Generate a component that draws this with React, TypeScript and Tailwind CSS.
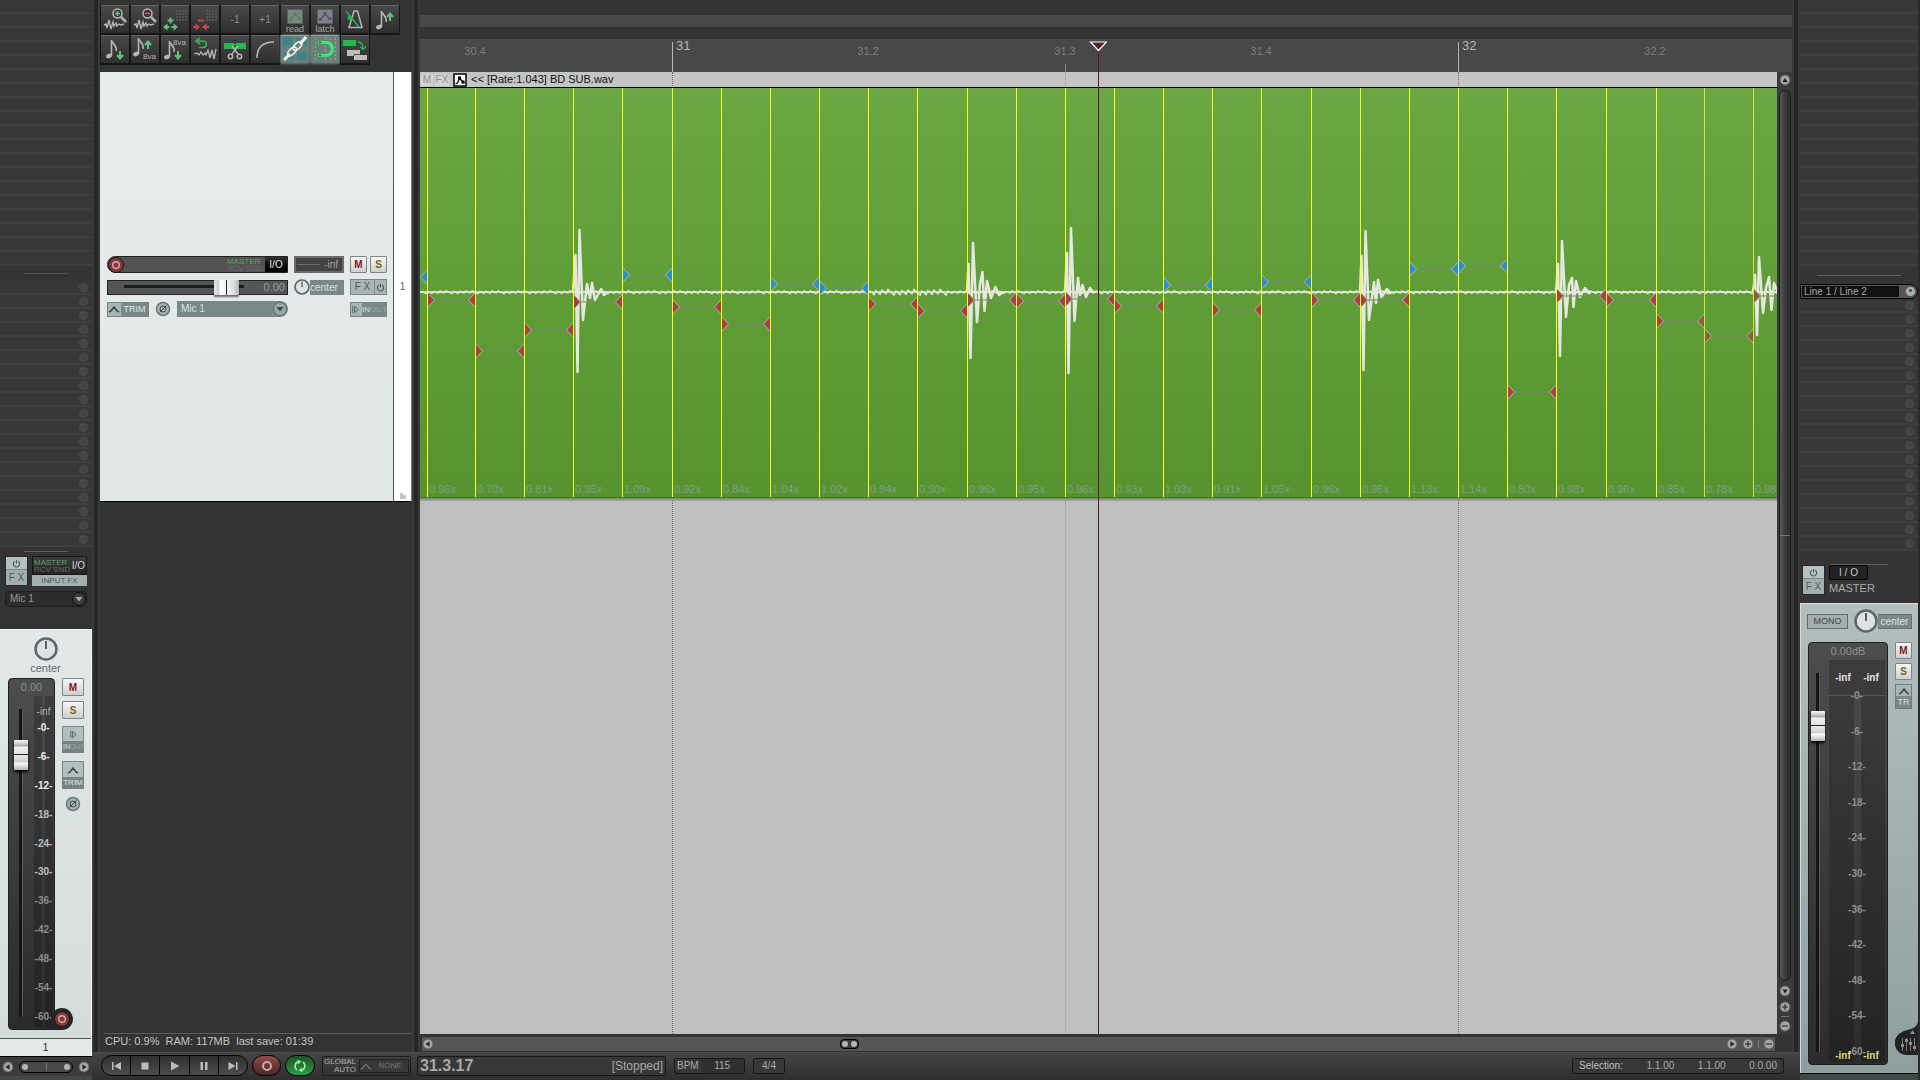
import { useState } from 'react';

interface Marker {
  x: number;
  y: number;
  rate: string;
  dim?: boolean;
}

// x is measured from the left edge of the arrange view, y from the top of the item body
const markers: Marker[] = [
  { x: 7, y: 212, rate: '0.96x' },
  { x: 55, y: 263, rate: '0.70x' },
  { x: 104, y: 242, rate: '0.81x' },
  { x: 153, y: 214, rate: '0.95x' },
  { x: 202, y: 187, rate: '1.09x' },
  { x: 252, y: 219, rate: '0.92x' },
  { x: 301, y: 236, rate: '0.84x' },
  { x: 350, y: 196, rate: '1.04x' },
  { x: 399, y: 200, rate: '1.02x' },
  { x: 448, y: 216, rate: '0.94x' },
  { x: 497, y: 223, rate: '0.90x' },
  { x: 547, y: 212, rate: '0.96x' },
  { x: 596, y: 213, rate: '0.95x' },
  { x: 645, y: 211, rate: '0.96x' },
  { x: 694, y: 218, rate: '0.93x' },
  { x: 743, y: 197, rate: '1.03x' },
  { x: 792, y: 222, rate: '0.91x' },
  { x: 841, y: 194, rate: '1.05x' },
  { x: 891, y: 212, rate: '0.96x' },
  { x: 940, y: 212, rate: '0.96x' },
  { x: 989, y: 181, rate: '1.13x' },
  { x: 1038, y: 178, rate: '1.14x' },
  { x: 1087, y: 304, rate: '0.50x' },
  { x: 1136, y: 208, rate: '0.98x' },
  { x: 1186, y: 212, rate: '0.96x' },
  { x: 1236, y: 233, rate: '0.85x' },
  { x: 1284, y: 248, rate: '0.78x', dim: true },
  { x: 1333, y: 208, rate: '0.98x', dim: true },
];

const transients = [
  'M153 204L155.5 167L157.5 284L159.5 142L163 232L167 196L170 210L172 195L175 212L181 201L184 207L188 204',
  'M547 204L548.5 176L550.5 270L553 155L557 234L560 196L562.5 184L564.5 223L567 193L571 210L575.5 199L579 207L583 204',
  'M645 204L647 165L648.5 285L651 140L654.5 233L658 190L660 207L662.5 197L666 209L670 200L674 205',
  'M940 204L941.5 168L943.5 282L945.5 143L949 232L954 194L956 215L958 192L961.5 209L967 201L971 206',
  'M1136 204L1138 176L1140 268L1142 153L1146 229L1149 197L1152 190L1153.5 219L1156 193L1160 209L1165 200L1170 206',
  'M1333 204L1335 187L1337 247L1339 169L1343 225L1346 200L1349 189L1351.5 222L1354 195L1358 205',
];

function noisePath() {
  let d = 'M0 204';
  for (let x = 2; x < 1372; x += 2) {
    const loud = x > 448 && x < 530 ? 2 : 1;
    const n = ((x * 7919) % 13) / 13;
    d += `L${x} ${(204 + (n - 0.4) * 3 * loud).toFixed(1)}`;
  }
  return d;
}

const baseline = noisePath();

const rulerLabels = [
  { x: 55, text: '30.4' },
  { x: 448, text: '31.2' },
  { x: 645, text: '31.3' },
  { x: 841, text: '31.4' },
  { x: 1235, text: '32.2' },
];

const dbScale = ['-0-', '-6-', '-12-', '-18-', '-24-', '-30-', '-36-', '-42-', '-48-', '-54-', '-60-'];

const GREEN = '#5fc47f';
const GRAY = '#b5b5b5';

const Note = ({ x = 0, y = 0 }: { x?: number; y?: number }) => (
  <g transform={`translate(${x} ${y})`} stroke={GRAY} fill="none" strokeWidth="1.6">
    <ellipse cx="3" cy="17" rx="3" ry="2.2" fill={GRAY} stroke="none" transform="rotate(-20 3 17)" />
    <path d="M5.5 17V1C6 5 11.500 6 10 12" />
  </g>
);

const Arrow = ({ x, y, down }: { x: number; y: number; down?: boolean }) => (
  <path
    d={down ? `M${x} ${y}v6m-3 -2l3 3.500l3 -3.500` : `M${x} ${y}v-7m-3 3l3 -3.500l3 3.500`}
    fill="none"
    stroke={GREEN}
    strokeWidth="2"
  />
);

const DottedRules = () => (
  <path d="M16 5v12M19 5v12M22 5v12M25 5v12" stroke="#6a6a6a" strokeDasharray="2 1" />
);

const MiniWave = () => (
  <path d="M3 20l2 -1l1 4l2 -8l2 9l2 -7l1 4l2 -3l1 3l2 -2l2 1l3 -1" fill="none" stroke={GRAY} strokeWidth="1.4" />
);

const AutoMode = ({ color }: { color: string }) => (
  <>
    <rect x="6.500" y="4.500" width="15" height="14" fill="#7a8684" stroke="#59615f" />
    <path d="M8 15l2 -1l4 -5l3 3l3 2" fill="none" stroke={color} strokeWidth="1.5" />
    <path d="M8 13h3v3h-3zM12.500 7h3v3h-3zM17 12h3v3h-3z" fill={color} />
  </>
);

const topTools = [
  {
    name: 'Zoom in',
    icon: (
      <>
        <MiniWave />
        <circle cx="16.500" cy="8.500" r="4.500" fill="#3a3a3a" stroke={GRAY} strokeWidth="1.5" />
        <path d="M20 12l5 5" stroke={GRAY} strokeWidth="2.500" />
        <path d="M14 8.500h5M16.500 6v5" stroke={GREEN} strokeWidth="1.5" />
      </>
    ),
  },
  {
    name: 'Zoom out',
    icon: (
      <>
        <MiniWave />
        <circle cx="16.500" cy="8.500" r="4.500" fill="#3a3a3a" stroke={GRAY} strokeWidth="1.5" />
        <path d="M20 12l5 5" stroke={GRAY} strokeWidth="2.500" />
        <path d="M14 8.500h5" stroke="#d25555" strokeWidth="1.5" />
      </>
    ),
  },
  {
    name: 'Widen grid',
    icon: (
      <>
        <DottedRules />
        <path d="M6.500 15.500h6M9.500 12.500v6" stroke={GREEN} strokeWidth="2" />
        <path d="M2 22l4.500 -3.500v2.500h2v2h-2v2.500zM17 22l-4.500 -3.500v2.500h-2v2h2v2.500z" fill={GREEN} />
      </>
    ),
  },
  {
    name: 'Narrow grid',
    icon: (
      <>
        <DottedRules />
        <path d="M7 15.500h6" stroke="#c94848" strokeWidth="2" />
        <path d="M9 22l-4.500 -3.500v2.500h-2.500v2h2.500v2.500zM11 22l4.500 -3.500v2.500h2.500v2h-2.500v2.500z" fill="#c94848" />
      </>
    ),
  },
  { name: 'Minus one', text: '-1' },
  { name: 'Plus one', text: '+1' },
  { name: 'Automation read', icon: <AutoMode color="#4c8a58" />, caption: 'read' },
  { name: 'Automation latch', icon: <AutoMode color="#6b4a82" />, caption: 'latch' },
  {
    name: 'Metronome',
    icon: (
      <>
        <path d="M13 6h3.500l4.500 16.500h-13z" fill="none" stroke={GRAY} strokeWidth="1.5" />
        <path d="M5 6l13 16" stroke="#22b455" strokeWidth="1.6" />
        <path d="M8 10l4 3l-3 3l-3 -3z" fill="#22b455" />
      </>
    ),
  },
  {
    name: 'Semitone up',
    icon: (
      <>
        <Note x={5} y={5} />
        <Arrow x={19} y={16} />
      </>
    ),
  },
];

const bottomTools = [
  {
    name: 'Semitone down',
    icon: (
      <>
        <Note x={5} y={4} />
        <Arrow x={19} y={16} down />
      </>
    ),
  },
  {
    name: 'Octave up',
    icon: (
      <>
        <Note x={2} y={2} />
        <Arrow x={17} y={14} />
        <text x="12" y="24" fontSize="8" fill={GRAY}>8va</text>
      </>
    ),
  },
  {
    name: 'Octave down',
    icon: (
      <>
        <Note x={3} y={5} />
        <Arrow x={17} y={16} down />
        <text x="12" y="10" fontSize="8" fill={GRAY}>8va</text>
      </>
    ),
  },
  {
    name: 'Reverse item',
    icon: (
      <>
        <path d="M6 6h6a3 3 0 0 1 0 6.500h-4M9 3l-4 3l4 3" fill="none" stroke="#2fb35a" strokeWidth="1.6" />
        <path d="M3 19l3 -1l2 2l2 -3l2 3l2 -2l1 2l2 -5l2 8l2 -8l2 9l2 -10" fill="none" stroke={GRAY} strokeWidth="1.3" />
      </>
    ),
  },
  {
    name: 'Split item',
    icon: (
      <>
        <rect x="3" y="8" width="22" height="6" fill="#23b950" />
        <path d="M14 4v10" stroke="#222" strokeDasharray="2 1" />
        <path d="M11 11l6 8M17 11l-6 8" stroke={GRAY} strokeWidth="1.5" />
        <circle cx="9.500" cy="21.500" r="2.200" fill="none" stroke={GRAY} strokeWidth="1.5" />
        <circle cx="18.500" cy="21.500" r="2.200" fill="none" stroke={GRAY} strokeWidth="1.5" />
      </>
    ),
  },
  { name: 'Fade in', icon: <path d="M6 23C6 13 11 7 23 7" fill="none" stroke={GRAY} strokeWidth="1.6" /> },
  {
    name: 'Grouping',
    active: true,
    icon: (
      <>
        <path d="M2 2h10v9h-10zM15 3h5v5h-5zM21 5h5v6h-5zM16 16h10v9h-10zM3 17h4v4h-4zM7 20h6v5h-6z" fill="#3f8489" />
        <path d="M3 25L9 19M19 9L25 2" stroke="#eef4f2" strokeWidth="3" />
        <ellipse cx="11" cy="16.500" rx="5.500" ry="2.800" transform="rotate(-45 11 16.500)" fill="none" stroke="#eef4f2" strokeWidth="1.7" />
        <ellipse cx="16.500" cy="11" rx="5.500" ry="2.800" transform="rotate(-45 16.500 11)" fill="none" stroke="#eef4f2" strokeWidth="1.7" />
      </>
    ),
  },
  {
    name: 'Snap',
    active: true,
    icon: (
      <>
        <path d="M4.500 3v22" stroke="#27e069" strokeDasharray="2 2" />
        <path d="M14.500 3v22M19.500 3v22M24.500 3v22" stroke="#8fa79b" strokeDasharray="2 2" />
        <path d="M7 7.500h8a6.500 6.500 0 0 1 0 13h-8" fill="none" stroke="#35ee70" strokeWidth="3" />
        <path d="M8 7.500h2M8 20.500h2" stroke="#14602e" strokeWidth="1.5" />
      </>
    ),
  },
  {
    name: 'Ripple editing',
    icon: (
      <>
        <rect x="2" y="5" width="13" height="6" fill="#23b950" />
        <path d="M17 7q5 0 5 7M19 11.500l3 3l3 -3" fill="none" stroke="#23b950" strokeWidth="1.3" />
        <path d="M6 15h13v5h7v5h-13v-4h-7z" fill="#bdbdbd" />
        <path d="M13 21v-1.500h6" fill="none" stroke="#555" />
      </>
    ),
  },
];

interface Tool {
  name: string;
  icon?: React.ReactNode;
  text?: string;
  caption?: string;
  active?: boolean;
}

function ToolButton({ tool }: { tool: Tool }) {
  return (
    <button
      aria-label={tool.name}
      className={`relative h-7 w-7 border-t text-[10px] text-[#8d8d8d] ${
        tool.active
          ? 'border-[#93a29d] bg-[#6d7f7b] shadow-[0_0_3px_#9fb5af]'
          : 'border-[#626262] bg-gradient-to-b from-[#484848] to-[#2e2e2e] shadow-[0_1px_0_1px_#161616]'
      }`}
    >
      {tool.icon && (
        <svg viewBox="0 0 28 28" className="absolute inset-x-0 -top-px h-7 w-7">
          {tool.icon}
        </svg>
      )}
      {tool.text}
      {tool.caption && (
        <span className="absolute inset-x-0 bottom-0 text-[9px] leading-[8px] text-[#a9a9a9]">{tool.caption}</span>
      )}
    </button>
  );
}

function Slots({ count, sends }: { count: number; sends?: boolean }) {
  return (
    <div className="shrink-0">
      {Array.from({ length: count }, (_, i) => (
        <div
          key={i}
          className="flex h-[14px] items-center justify-end border-b-2 border-[#3f3f3f] bg-[#373737] pr-1"
        >
          {sends && <span className="h-[9px] w-[9px] rounded-full border border-[#4c4f4e] bg-[#424544]" />}
        </div>
      ))}
    </div>
  );
}

const Divider = () => (
  <div className="flex h-[15px] shrink-0 items-center justify-center">
    <span className="h-px w-11 bg-[#505050]" />
  </div>
);

function PanKnob({ size }: { size: 'sm' | 'lg' }) {
  return (
    <button aria-label="Pan" className="shrink-0">
      <svg viewBox="0 0 24 24" className={size === 'lg' ? 'h-6 w-6' : 'h-4 w-4'}>
        <circle cx="12" cy="12" r="10.500" fill="#dde2e2" stroke="#5b6969" strokeWidth="2.500" />
        <path d="M12 4v8" stroke="#333" strokeWidth="1.5" />
      </svg>
    </button>
  );
}

function MuteSolo({ letter, className }: { letter: 'M' | 'S'; className: string }) {
  return (
    <button
      aria-label={letter === 'M' ? 'Mute' : 'Solo'}
      className={`flex items-center justify-center rounded-[1px] border border-[#7f8686] bg-gradient-to-b from-[#f6f6f6] to-[#cfcfcf] text-[10px] font-bold ${
        letter === 'M' ? 'text-[#7b1717]' : 'text-[#6f6a1a]'
      } ${className}`}
    >
      {letter}
    </button>
  );
}

const PowerIcon = () => (
  <svg viewBox="0 0 10 10" className="h-[9px] w-[9px]">
    <path d="M3 2.500a3.500 3.500 0 1 0 4 0M5 1v4" fill="none" stroke="#4f5b5b" strokeWidth="1.2" />
  </svg>
);

const EnvIcon = () => (
  <svg viewBox="0 0 12 10" className="h-[10px] w-3">
    <path d="M1 8l2 -1l3 -4l3 4l2 1" fill="none" stroke="#3c4747" strokeWidth="1.5" />
  </svg>
);

const MonitorIcon = () => (
  <svg viewBox="0 0 10 10" className="h-[9px] w-[9px] shrink-0">
    <path d="M2 1v8M4 1.500l4 3.500l-4 3.500z" fill="none" stroke="#536060" />
  </svg>
);

const PhaseButton = () => (
  <button aria-label="Phase" className="flex h-4 w-4 shrink-0 items-center justify-center">
    <svg viewBox="0 0 16 16" className="h-4 w-4">
      <circle cx="8" cy="8" r="6.500" fill="#a7b3b3" stroke="#6d7a7a" strokeWidth="1.5" />
      <circle cx="8" cy="8" r="3" fill="none" stroke="#414b4b" />
      <path d="M4.500 11.500l7 -7" stroke="#414b4b" />
    </svg>
  </button>
);

const RecordButton = () => (
  <button aria-label="Record arm" className="h-4 w-4 shrink-0">
    <svg viewBox="0 0 16 16" className="h-4 w-4">
      <circle cx="8" cy="8" r="7.500" fill="#7e3b3b" stroke="#2a1212" />
      <circle cx="8" cy="8" r="3.300" fill="none" stroke="#d8a8a8" strokeWidth="1.4" />
    </svg>
  </button>
);

const FxStack = () => (
  <div className="h-[30px] w-[23px] shrink-0 border border-[#22282a] bg-[#a3afaf]">
    <button aria-label="Bypass FX" className="flex h-[13px] w-full items-center justify-center border-b border-[#7d8989] bg-[#b5c0c0]">
      <PowerIcon />
    </button>
    <button className="block h-[15px] w-full text-[10px] leading-[15px] text-[#4f5b5b]">F X</button>
  </div>
);

function Routing() {
  return (
    <span className="text-[8px] leading-[7px]">
      <span className="block text-[#58a563]">MASTER</span>
      <span className="block text-[#6a6a6a]">RCV SND</span>
    </span>
  );
}

function InputSelect({ className, dark }: { className: string; dark?: boolean }) {
  return (
    <label className={`relative block ${className}`}>
      <select
        aria-label="Record input"
        className={`block h-4 w-full appearance-none pl-1 text-[10px] leading-[14px] ${
          dark ? 'rounded-sm border border-[#1d1d1d] bg-[#2c2c2c] text-[#9a9a9a]' : 'rounded-r-full bg-[#7a8888] text-[#dbe1e1]'
        }`}
      >
        <option>Mic 1</option>
      </select>
      <svg viewBox="0 0 16 16" className="pointer-events-none absolute right-0 top-0 h-4 w-4">
        <circle cx="8" cy="8" r="6.500" fill={dark ? '#3b3b3b' : '#9aa7a7'} stroke={dark ? '#0f0f0f' : '#5c6969'} />
        <path d="M4.500 6h7l-3.500 4.500z" fill={dark ? '#a8a8a8' : '#3f4b4b'} />
      </svg>
    </label>
  );
}

const verticalFader =
  'block w-[14px] shrink-0 appearance-none bg-[linear-gradient(to_right,transparent_5px,#151515_5px,#151515_8px,#5c5c5c_8px,#5c5c5c_9px,transparent_9px)] [writing-mode:vertical-lr] [direction:rtl] [&::-webkit-slider-thumb]:h-[30px] [&::-webkit-slider-thumb]:w-[14px] [&::-webkit-slider-thumb]:appearance-none [&::-webkit-slider-thumb]:rounded-[1px] [&::-webkit-slider-thumb]:bg-[linear-gradient(#fff_0,#a9a9a9_6px,#f1f1f1_7px,#e2e2e2_14px,#222_14px,#222_15px,#e8e8e8_15px,#cfcfcf_22px,#fff_23px,#b4b4b4_30px)] [&::-webkit-slider-thumb]:shadow-[0_2px_3px_#000]';

function MixerStrip() {
  return (
    <aside className="flex w-[92px] shrink-0 flex-col bg-[#333333]">
      <Slots count={19} />
      <Divider />
      <Slots count={19} sends />
      <div className="flex h-[9px] shrink-0 items-center justify-center">
        <span className="h-px w-11 bg-[#606060]" />
      </div>
      <div className="flex shrink-0 justify-between px-[5px]">
        <FxStack />
        <div className="w-[55px]">
          <div className="flex h-[19px] items-center justify-between border border-[#161616] bg-gradient-to-b from-[#3d3d3d] to-[#242424] px-px">
            <Routing />
            <button className="text-[10px] text-[#d0d0d0]">I/O</button>
          </div>
          <button className="block h-[11px] w-full bg-[#a3afaf] text-[8px] leading-[11px] text-[#4b5858]">INPUT FX</button>
        </div>
      </div>
      <InputSelect dark className="mx-[5px] mt-[5px] shrink-0" />
      <div className="mt-[22px] flex min-h-0 flex-1 flex-col border-r border-t border-[#f4f6f6] bg-gradient-to-b from-[#e3e8e8] to-[#d3dbdb]">
        <div className="flex h-[48px] shrink-0 flex-col items-center pt-[7px] text-[11px] leading-[14px] text-[#5e6c6c]">
          <PanKnob size="lg" />
          center
        </div>
        <div className="flex min-h-0 flex-1 gap-[7px] pb-2 pl-2">
          <div className="relative flex w-[47px] flex-col rounded-sm border border-[#1b2020] bg-gradient-to-b from-[#4d4d4d] to-[#2b2b2b]">
            <div className="h-[17px] text-center text-[11px] leading-[17px] text-[#8f8f8f]">0.00</div>
            <div className="flex min-h-0 flex-1 pl-[5px]">
              <input type="range" aria-label="Track volume" defaultValue={89} className={`mb-3 mt-[13px] ${verticalFader}`} />
              <div className="mb-0.5 ml-1.5 flex w-[19px] flex-col items-center bg-[linear-gradient(to_right,#0003_8px,transparent_8px,transparent_11px,#0003_11px)] text-[10px] font-bold leading-3">
                <span className="mt-2.5 font-normal text-[#b0b0b0]">-inf</span>
                <div className="mt-1 flex flex-1 flex-col items-center justify-between pb-1">
                  {dbScale.map((db, i) => (
                    <span key={db} className={i < 3 ? 'text-[#ededed]' : i < 6 ? 'text-[#bdbdbd]' : 'text-[#8c8c8c]'}>
                      {db}
                    </span>
                  ))}
                </div>
              </div>
            </div>
            <span className="absolute -bottom-px -right-[19px] flex h-[22px] w-[22px] items-center justify-center rounded-full rounded-bl-none bg-[#222626]">
              <RecordButton />
            </span>
          </div>
          <div className="flex flex-col items-center">
            <MuteSolo letter="M" className="h-[18px] w-[22px]" />
            <MuteSolo letter="S" className="mt-[5px] h-[18px] w-[22px]" />
            <button aria-label="Record monitoring" className="mt-[7px] w-[22px] border border-[#77857f] bg-[#b3bebe]">
              <span className="flex h-[14px] items-center justify-center"><MonitorIcon /></span>
              <span className="block h-[11px] bg-[#768383] text-[7px] leading-[11px] text-[#d8dede]">IN<span className="text-[#9aa5a5]">OUT</span></span>
            </button>
            <button aria-label="Envelopes" className="mt-2 w-[22px] border border-[#77857f] bg-[#b3bebe]">
              <span className="flex h-[15px] items-center justify-center"><EnvIcon /></span>
              <span className="block h-[11px] bg-[#768383] text-[8px] leading-[11px] text-[#e4e9e9]">TRIM</span>
            </button>
            <div className="mt-[7px]"><PhaseButton /></div>
          </div>
        </div>
        <div className="h-[18px] shrink-0 border-t border-[#555] bg-[#e4e9e9] text-center text-[11px] leading-[17px] text-[#333]">1</div>
      </div>
      <div className="flex h-5 shrink-0 items-center justify-between border-t border-black bg-[#3b3b3b] px-0.5">
        <ScrollButton kind="left" />
        <div className="flex h-3 w-[54px] items-center justify-between rounded-full border border-black bg-[#484848] px-0.5">
          <span className="h-1.5 w-1.5 rounded-full bg-[#b5b5b5]" />
          <span className="h-2 w-px bg-[#777]" />
          <span className="h-1.5 w-1.5 rounded-full bg-[#b5b5b5]" />
        </div>
        <ScrollButton kind="right" />
      </div>
      <div className="h-1 shrink-0 bg-[#3d4a48]" />
    </aside>
  );
}

const scrollShapes: Record<string, string> = {
  up: 'M3.500 8h5l-2.500 -4z',
  down: 'M3.500 4.500h5l-2.500 4z',
  left: 'M7.500 3.500v5l-4 -2.500z',
  right: 'M4.500 3.500v5l4 -2.500z',
  plus: 'M3 5.500h2.500v-2.500h1v2.500h2.500v1h-2.500v2.500h-1v-2.500h-2.500z',
  minus: 'M3 5.500h6v1h-6z',
};

function ScrollButton({ kind }: { kind: string }) {
  return (
    <button aria-label={kind} className="h-3 w-3 shrink-0">
      <svg viewBox="0 0 12 12" className="h-3 w-3">
        <circle cx="6" cy="6" r="5" fill="#a5a5a5" stroke="#5f5f5f" />
        <path d={scrollShapes[kind]} fill="#1c1c1c" />
      </svg>
    </button>
  );
}

function TrackPanel() {
  return (
    <section className="flex w-[312px] shrink-0 flex-col">
      <div className="flex h-[72px] shrink-0 flex-col gap-0.5 pl-px pt-[5px]">
        <div className="flex gap-0.5">
          {topTools.map((tool) => <ToolButton key={tool.name} tool={tool} />)}
        </div>
        <div className="flex gap-0.5">
          {bottomTools.map((tool) => <ToolButton key={tool.name} tool={tool} />)}
        </div>
      </div>
      <div className="flex h-[430px] shrink-0 border-b border-r border-black border-r-[#777] bg-gradient-to-b from-[#e8ecec] to-[#e1e6e7]">
        <div className="flex flex-1 flex-col justify-center gap-1.5 pl-[7px] pr-1.5">
          <div className="flex items-center gap-1.5">
            <div className="flex h-[17px] w-[181px] items-center rounded-l-full border border-[#222] bg-[#535353]">
              <RecordButton />
              <span className="ml-auto mr-0.5"><Routing /></span>
              <button className="h-full w-[22px] bg-gradient-to-b from-[#333] to-black text-[10px] text-[#e0e0e0]">I/O</button>
            </div>
            <div className="flex h-[17px] w-[50px] items-center border-2 border-[#6a6a6a] bg-[#424242] pl-px">
              <span className="h-px flex-1 bg-[#6b6b6b]" />
              <span className="px-1 text-[10px] text-[#a3a3a3]">-inf</span>
            </div>
            <div className="ml-auto flex gap-[3px]">
              <MuteSolo letter="M" className="h-[17px] w-[17px]" />
              <MuteSolo letter="S" className="h-[17px] w-[17px]" />
            </div>
          </div>
          <div className="flex items-center gap-1.5">
            <div className="flex h-[15px] w-[181px] items-center border border-[#222] bg-[#555] pl-4">
              <input
                type="range"
                aria-label="Volume"
                defaultValue={95}
                className="h-4 w-[120px] appearance-none bg-[linear-gradient(transparent_6px,#1c1c1c_6px,#1c1c1c_9px,transparent_9px)] [&::-webkit-slider-thumb]:h-[15px] [&::-webkit-slider-thumb]:w-[25px] [&::-webkit-slider-thumb]:appearance-none [&::-webkit-slider-thumb]:rounded-[1px] [&::-webkit-slider-thumb]:bg-[linear-gradient(to_right,#e8e8e8_0,#cfcfcf_5px,#fff_6px,#f0f0f0_12px,#222_12px,#222_13px,#f2f2f2_13px,#ddd_20px,#b5b5b5_25px)] [&::-webkit-slider-thumb]:shadow-[0_2px_2px_#0008]"
              />
              <span className="ml-auto pr-0.5 text-[11px] text-[#9a9a9a]">0.00</span>
            </div>
            <div className="flex w-[50px] items-center">
              <PanKnob size="sm" />
              <span className="h-[15px] flex-1 bg-[#7a8888] text-[10px] leading-[15px] text-[#dbe1e1]">center</span>
            </div>
            <div className="ml-auto flex h-4 w-[37px] border border-[#7a8686] bg-[#aab5b5]">
              <button className="flex-1 text-[10px] leading-[14px] text-[#4f5b5b]">F X</button>
              <button aria-label="Bypass" className="flex w-3 items-center justify-center border-l border-[#7a8686]"><PowerIcon /></button>
            </div>
          </div>
          <div className="flex items-center gap-1.5">
            <button aria-label="Envelopes" className="flex h-[15px] w-[42px] items-center border border-[#77857f] bg-[#a9b5b5]">
              <EnvIcon />
              <span className="ml-px h-full flex-1 bg-[#7a8888] text-[9px] leading-[13px] text-[#e0e6e6]">TRIM</span>
            </button>
            <PhaseButton />
            <InputSelect className="w-[111px]" />
            <button aria-label="Monitoring" className="ml-auto flex h-[15px] w-[37px] items-center border border-[#77857f] bg-[#a9b5b5]">
              <MonitorIcon />
              <span className="ml-0.5 h-full flex-1 bg-[#7a8888] text-left text-[8px] leading-[13px] text-[#dbe1e1]">IN<span className="text-[#9aa7a7]">OUT</span></span>
            </button>
          </div>
        </div>
        <div className="relative flex w-[19px] items-center justify-center border-l border-[#555] bg-white text-[10px] text-[#666]">
          1
          <svg viewBox="0 0 8 8" className="absolute bottom-px right-1 h-2 w-2">
            <path d="M1 1h3v2h3v4h-6z" fill="#c4c4c4" />
          </svg>
        </div>
      </div>
      <div className="flex-1" />
      <div className="ml-1 h-[19px] shrink-0 border-t border-[#5a5a5a] pl-px text-[11px] leading-[14px] text-[#c4c4c4]">
        <span className="whitespace-pre">CPU: 0.9%  RAM: 117MB  last save: 01:39</span>
      </div>
    </section>
  );
}

function StretchHandles() {
  const ends = [{ x: -42, y: 189, rate: '1.10x' } as Marker, ...markers];
  return (
    <>
      {ends.map((m, i) => {
        const end = ends[i + 1]?.x ?? m.x + 49;
        const fill = m.rate.startsWith('1') ? '#2a8fd0' : m.dim ? '#8a6040' : '#a83f43';
        const endFill = ends[i + 1]?.dim && !m.rate.startsWith('1') ? '#8a6040' : fill;
        return (
          <g key={m.x} stroke="#b0b5a0" strokeWidth="1">
            <path d={`M${m.x + 7} ${m.y}H${end - 6}`} stroke="#7c8478" />
            <path d={`M${m.x + 1} ${m.y - 7}l6.500 7l-6.500 7`} fill={fill} />
            <path d={`M${end} ${m.y - 7}l-6.500 7l6.500 7`} fill={endFill} />
          </g>
        );
      })}
    </>
  );
}

function Arrange() {
  return (
    <section className="flex min-w-0 flex-1 flex-col">
      <div className="mt-[15px] h-3 shrink-0 bg-[#484848]" />
      <div className="relative mt-3 h-[33px] shrink-0 overflow-hidden bg-[#484848] text-[11px] leading-[13px] text-[#7d7d7d]">
        {rulerLabels.map((l) => (
          <span key={l.text} className="absolute top-[6px] -translate-x-1/2" style={{ left: l.x }}>{l.text}</span>
        ))}
        <span className="absolute left-[256px] top-0 text-[13px] text-[#b5b5b5]">31</span>
        <span className="absolute bottom-0 left-[252px] top-[3px] border-l border-[#b5b5b5]" />
        <span className="absolute left-[1042px] top-0 text-[13px] text-[#b5b5b5]">32</span>
        <span className="absolute bottom-0 left-[1038px] top-[3px] border-l border-[#b5b5b5]" />
        <span className="absolute bottom-0 left-[645px] h-2 border-l border-[#8a8a8a]" />
      </div>
      <div className="flex min-h-0 flex-1">
        <div className="relative min-w-0 flex-1 bg-[#bec0bf]">
          <div className="flex h-[15px] items-center gap-0.5 bg-[#c4c6c5] pl-px text-[11px] text-[#111]">
            <button className="w-3 bg-[#d2d4d3] text-[10px] leading-3 text-[#8f8f8f]">M</button>
            <button className="w-[14px] bg-[#d2d4d3] text-[10px] leading-3 text-[#8f8f8f]">FX</button>
            <button aria-label="Item envelopes">
              <svg viewBox="0 0 14 14" className="ml-0.5 h-[14px] w-[14px]">
                <rect x="1" y="1" width="12" height="12" fill="#fff" stroke="#000" strokeWidth="1.5" />
                <path d="M2.500 11l2 -1l2 -5l2.500 3l2.500 2" fill="none" stroke="#000" strokeWidth="1.300" />
                <path d="M5 3.500h3v3h-3zM8.500 7.500h3v3h-3z" />
              </svg>
            </button>
            <span className="pl-0.5">&lt;&lt; [Rate:1.043] BD SUB.wav</span>
          </div>
          <div className="absolute inset-0 overflow-hidden">
            <span className="absolute inset-y-0 left-[252px] border-l border-dotted border-[#6a6a6a]" />
            <span className="absolute inset-y-0 left-[645px] border-l border-dotted border-[#9a9a9a]" />
            <span className="absolute inset-y-0 left-[1038px] border-l border-dotted border-[#6a6a6a]" />
          </div>
          <div className="relative h-[411px] overflow-hidden border-t border-black bg-gradient-to-b from-[#6ba744] via-[#5f9e37] to-[#56932f]">
            <svg className="absolute inset-0 h-full w-full">
              <path d={baseline} fill="none" stroke="#e3e6dd" strokeWidth="1.5" />
              <path d="M0 204H2000" stroke="#e3e6dd" strokeWidth="1.5" />
              {transients.map((d) => (
                <path key={d} d={d} fill="none" stroke="#e6e8e0" strokeWidth="2.500" strokeLinejoin="round" />
              ))}
              <StretchHandles />
              {markers.map((m) => (
                <path key={m.x} d={`M${m.x + 0.5} 0V410`} stroke={m.dim ? '#dbe324' : '#ffff1c'} />
              ))}
              <path d="M0 409.500H2000" stroke="#3f7a1d" />
            </svg>
            {markers.map((m) => (
              <span
                key={m.x}
                className="absolute bottom-[2px] text-[11px] leading-[13px] text-[#7f9f8a]"
                style={{ left: m.x + 2 }}
              >
                {m.rate}
              </span>
            ))}
          </div>
          <div className="relative h-[3px] bg-gradient-to-b from-[#7c7c7c] to-[#aaacab]" />
          <svg className="absolute bottom-0 left-[669px] h-[calc(100%+31px)] w-[18px]">
            <path d="M9.500 9V2000" stroke="#571a14" />
            <path d="M1.500 1h16l-8 8.500z" fill="#5a2020" stroke="#fff" strokeWidth="1.200" />
          </svg>
        </div>
        <div className="flex w-[15px] shrink-0 flex-col items-center gap-1 bg-[#3a3a3a] pb-0.5 pt-0.5">
          <ScrollButton kind="up" />
          <div className="flex w-3 flex-1 items-center rounded-full border border-[#1b1b1b] bg-gradient-to-r from-[#5a5a5a] via-[#3a3a3a] to-[#2c2c2c]">
            <span className="h-px w-full bg-[#777]" />
          </div>
          <ScrollButton kind="down" />
          <ScrollButton kind="plus" />
          <span className="-my-px h-px w-2 bg-[#777]" />
          <ScrollButton kind="minus" />
        </div>
      </div>
      <div className="mr-[15px] flex h-[18px] shrink-0 items-start border-t border-[#333] px-0.5 pt-0.5">
        <div className="flex h-[14px] flex-1 items-center bg-[#565656]">
          <ScrollButton kind="left" />
          <div className="ml-[30%] flex h-[10px] w-[19px] items-center justify-between rounded-sm border border-black bg-[#3a3a3a] px-px">
            <span className="h-1.5 w-1.5 rounded-full bg-[#b5b5b5]" />
            <span className="h-1.5 w-1.5 rounded-full bg-[#b5b5b5]" />
          </div>
          <div className="ml-auto flex items-center gap-1">
            <ScrollButton kind="right" />
            <ScrollButton kind="plus" />
            <span className="h-2 w-px bg-[#777]" />
            <ScrollButton kind="minus" />
          </div>
        </div>
      </div>
    </section>
  );
}

const transportButtons = [
  { name: 'Go to start', d: 'M4 3h1.500v8h-1.500zM13 3v8l-7 -4z' },
  { name: 'Stop', d: 'M4.500 3.500h7v7h-7z' },
  { name: 'Play', d: 'M4 2.500v9l8.500 -4.500z' },
  { name: 'Pause', d: 'M4.500 3h2.500v8h-2.500zM9 3h2.500v8h-2.500z' },
  { name: 'Go to end', d: 'M11 3h1.500v8h-1.500zM3.500 3v8l7 -4z' },
];

function Transport() {
  const [bpm, setBpm] = useState('115');
  const field = 'rounded-[2px] border border-[#171717] bg-[#373737] text-[#a9a9a9]';

  return (
    <footer className="flex h-7 shrink-0 items-center border-t border-[#4b4b4b] bg-gradient-to-b from-[#454545] to-[#2e2e2e] pb-1 pl-[9px] pr-4 pt-0.5">
      <div className="flex h-[21px] w-[147px] divide-x divide-black overflow-hidden rounded-full border border-black bg-gradient-to-b from-[#303030] to-[#4c4c4c]">
        {transportButtons.map((b) => (
          <button key={b.name} aria-label={b.name} className="flex flex-1 items-center justify-center">
            <svg viewBox="0 0 16 14" className="h-[14px] w-4"><path d={b.d} fill="#bcbcbc" /></svg>
          </button>
        ))}
      </div>
      <button aria-label="Record" className="ml-1 flex h-[21px] w-[29px] items-center justify-center rounded-full border border-black bg-gradient-to-b from-[#8c4a4a] to-[#4d2626]">
        <span className="h-[10px] w-[10px] rounded-full border-2 border-[#c9a5a5]" />
      </button>
      <button aria-label="Repeat" className="ml-1 flex h-[21px] w-[30px] items-center justify-center rounded-full border border-black bg-gradient-to-b from-[#1c5427] to-[#2f9c46]">
        <svg viewBox="0 0 14 14" className="h-[14px] w-[14px]">
          <path d="M4 11A4.800 4.800 0 0 1 5.500 2.600M10 3A4.800 4.800 0 0 1 8.500 11.400" fill="none" stroke="#8df0a5" strokeWidth="1.6" />
          <path d="M4.500 0.500l4 2l-3.500 3zM9.500 13.500l-4 -2l3.500 -3z" fill="#8df0a5" />
        </svg>
      </button>
      <div className="ml-[7px] flex h-5 w-[89px] items-center justify-between rounded-[2px] border border-[#1c1c1c] px-px text-[8px] leading-[8px] text-[#adadad]">
        <span className="text-right">GLOBAL<br />AUTO</span>
        <button className="flex h-[14px] w-[50px] items-center border border-[#1f1f1f] bg-[#383838] text-[#777]">
          <svg viewBox="0 0 12 10" className="h-[10px] w-3">
            <path d="M1 8l2 -1l3 -4l3 4l2 1" fill="none" stroke="#888" />
          </svg>
          <span className="flex-1 text-center">NONE</span>
        </button>
      </div>
      <div className={`ml-1.5 flex h-5 w-[249px] items-center justify-between px-0.5 ${field}`}>
        <span className="text-[16px] font-bold">31.3.17</span>
        <span className="text-[12px]">[Stopped]</span>
      </div>
      <label className={`ml-2 flex h-4 w-[71px] items-center pl-0.5 text-[10px] ${field}`}>
        BPM
        <input value={bpm} onChange={(e) => setBpm(e.target.value)} className="ml-0.5 h-[14px] w-[43px] bg-[#303030] text-center text-[10px]" />
      </label>
      <button className={`ml-2 h-4 w-8 text-[10px] leading-[14px] ${field}`}>4/4</button>
      <div className={`ml-auto flex h-4 w-[212px] items-center justify-between px-1.5 text-[10px] ${field}`}>
        <span className="text-[#bdbdbd]">Selection:</span>
        <span>1.1.00</span>
        <span>1.1.00</span>
        <span>0.0.00</span>
      </div>
    </footer>
  );
}

function MasterStrip() {
  return (
    <aside className="flex w-[120px] shrink-0 flex-col border-r-2 border-[#2a2a2a] bg-[#343434]">
      <Slots count={19} />
      <div className="flex h-[18px] shrink-0 items-center justify-center">
        <span className="h-px w-[84px] bg-[#606060]" />
      </div>
      <div className="flex h-[15px] shrink-0 items-center rounded-r-full border border-black bg-[#565656] p-px">
        <button className="h-[11px] flex-1 bg-[#111] pl-0.5 text-left text-[10px] leading-[11px] text-[#a5a5a5]">Line 1 / Line 2</button>
        <span className="ml-[6px] flex h-[11px] w-[11px] items-start justify-center rounded-full border border-[#555] bg-[#a9b5b5]">
          <span className="mt-0.5 h-[3px] w-[3px] rounded-full bg-[#444]" />
        </span>
      </div>
      <Slots count={18} sends />
      <div className="flex h-[14px] shrink-0 items-end justify-center">
        <span className="h-px w-[58px] bg-[#606060]" />
      </div>
      <div className="flex h-[38px] shrink-0 gap-1 pl-0.5">
        <FxStack />
        <div>
          <button className="block h-[15px] w-[39px] rounded-[2px] border border-black bg-[#222] text-[10px] leading-[13px] text-[#c9c9c9]">I / O</button>
          <div className="mt-px text-[11px] leading-[14px] text-[#a9a9a9]">MASTER</div>
        </div>
      </div>
      <div className="relative flex min-h-0 flex-1 flex-col border-l border-t border-[#d5dede] bg-gradient-to-b from-[#b3bfbf] to-[#8f9f9f] pb-2">
        <div className="flex h-[38px] shrink-0 items-center pb-1 pl-1.5">
          <button className="h-[15px] w-[41px] border border-[#5f6d6d] bg-[#a3afaf] text-[9px] leading-[13px] text-[#3e4949]">MONO</button>
          <div className="ml-1.5 flex flex-1 items-center pr-1.5">
            <PanKnob size="lg" />
            <span className="h-[15px] flex-1 border border-l-0 border-[#64716f] bg-[#7a8888] text-center text-[10px] leading-[13px] text-[#dbe1e1]">center</span>
          </div>
        </div>
        <div className="flex min-h-0 flex-1 gap-[7px] pl-[7px]">
          <div className="flex w-[80px] flex-col rounded-sm border border-[#1b2020] bg-gradient-to-b from-[#4d4d4d] to-[#2b2b2b]">
            <div className="h-[17px] text-center text-[11px] leading-[17px] text-[#8f8f8f]">0.00dB</div>
            <div className="flex min-h-0 flex-1 pl-0.5">
              <input type="range" aria-label="Master volume" defaultValue={89} className={`mb-3 mt-[13px] ${verticalFader}`} />
              <div className="relative mb-0.5 ml-1 mr-0.5 flex flex-1 flex-col items-center bg-[linear-gradient(to_right,#0003_25px,transparent_25px,transparent_32px,#0003_32px)] text-[10px] font-bold leading-3">
                <div className="flex h-9 w-full items-center justify-around border-b border-[#555] bg-[#3b3b3b] text-[#e5e5e5]">
                  <span>-inf</span>
                  <span>-inf</span>
                </div>
                <div className="-mt-1.5 flex flex-1 flex-col items-center justify-between pb-1 text-[#8f8f8f]">
                  {dbScale.map((db) => <span key={db}>{db}</span>)}
                </div>
                <div className="absolute inset-x-0 bottom-0 flex justify-around text-[#d9dc84]">
                  <span>-inf</span>
                  <span>-inf</span>
                </div>
              </div>
            </div>
          </div>
          <div className="flex flex-col">
            <MuteSolo letter="M" className="h-[17px] w-[17px]" />
            <MuteSolo letter="S" className="mt-1 h-[17px] w-[17px]" />
            <button aria-label="Master envelopes" className="mt-1 w-[17px] border border-[#6d7b7b] bg-[#aab6b6]">
              <span className="flex h-[11px] items-center justify-center"><EnvIcon /></span>
              <span className="block h-[12px] bg-[#7a8888] text-[9px] leading-[12px] text-[#d5dcdc]">TR</span>
            </button>
          </div>
        </div>
        <button aria-label="Show mixer" className="absolute bottom-[18px] right-0 h-[34px] w-[23px]">
          <svg viewBox="0 0 23 34" className="h-[34px] w-[23px]">
            <path d="M23 0C22 9 12 8 7 11A12 12 0 0 0 11 34H23z" fill="#222" />
            <path d="M7.500 17v13M11.500 17v13M15.500 17v13M19.500 17v13" stroke="#777" />
            <path d="M6 23h3v3h-3zM10 18h3v3h-3zM14 21h3v3h-3zM18 25h3v3h-3zM15 13l2.500 -4l2.500 4z" fill="#8d8d8d" />
          </svg>
        </button>
      </div>
      <div className="h-[7px] shrink-0 border-t border-black bg-[#3d4a48]" />
    </aside>
  );
}

const Gutter = () => <div className="w-2 shrink-0 border-x-2 border-[#3a3a3a] bg-[#262626]" />;

export default function App() {
  return (
    <div className="flex h-screen w-full overflow-hidden bg-[#333333] font-['Liberation_Sans',Arial,sans-serif]">
      <MixerStrip />
      <main className="flex min-w-0 flex-1 flex-col">
        <div className="flex min-h-0 flex-1">
          <Gutter />
          <TrackPanel />
          <Gutter />
          <Arrange />
          <Gutter />
        </div>
        <Transport />
      </main>
      <MasterStrip />
    </div>
  );
}
